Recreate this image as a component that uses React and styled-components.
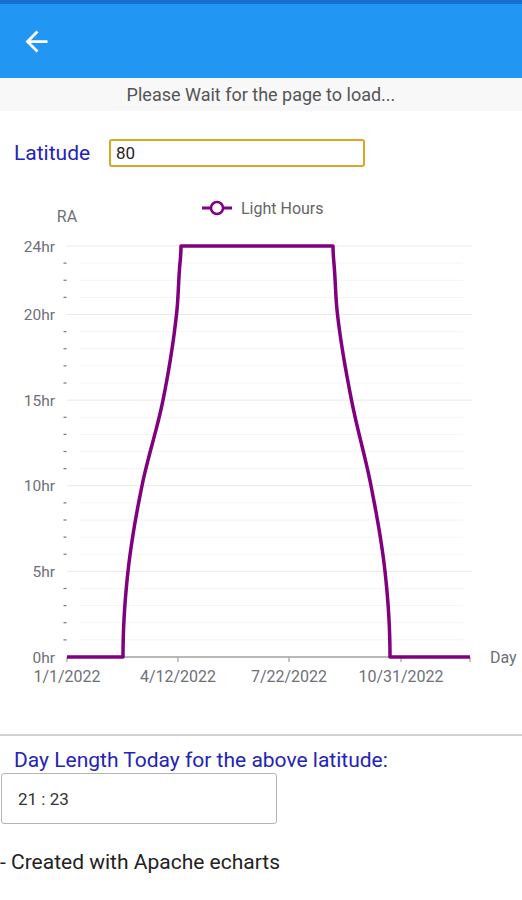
import React from "react";
import styled, { createGlobalStyle } from "styled-components";

const GlobalStyle = createGlobalStyle`
	body {
		margin: 0;
		background: #fff;
		font-family: Roboto, "Liberation Sans", sans-serif;
	}
`;

const PURPLE = "#800080";
const AXIS_TEXT = "#6e7079";

const hrToY = hr => 656 - hr * 17.125;

// x position of the curve at a few hour marks, read off the reference
const riseX = [[0, 123], [5, 128], [10, 142], [15, 163], [20, 176.5], [22.5, 179.3], [24, 181]];
const fallX = [[0, 390], [5, 385], [10, 371], [15, 351.5], [20, 337.5], [22.5, 334.6], [24, 333]];

// monotone cubic (hermite) so the curve stays smooth, vertical at 0 and 24
const sampleCurve = knots => {
	const n = knots.length;
	const sec = [];
	for (let i = 0; i < n - 1; i++) {
		sec.push((knots[i + 1][1] - knots[i][1]) / (knots[i + 1][0] - knots[i][0]));
	}
	const tan = knots.map((_, i) => (i === 0 || i === n - 1 ? 0 : (sec[i - 1] + sec[i]) / 2));
	const out = [];
	for (let i = 0; i < n - 1; i++) {
		const [h0, x0] = knots[i];
		const [h1, x1] = knots[i + 1];
		const dh = h1 - h0;
		for (let s = 0; s < 1; s += 0.05) {
			const s2 = s * s;
			const s3 = s2 * s;
			const x =
				(2 * s3 - 3 * s2 + 1) * x0 +
				(s3 - 2 * s2 + s) * dh * tan[i] +
				(-2 * s3 + 3 * s2) * x1 +
				(s3 - s2) * dh * tan[i + 1];
			out.push([x, h0 + s * dh]);
		}
	}
	out.push([knots[n - 1][1], knots[n - 1][0]]);
	return out;
};

const toPath = pts => pts.map(([x, h]) => `L${x.toFixed(2)},${hrToY(h).toFixed(2)}`).join(" ");

const linePath =
	`M67,${hrToY(0)} ` +
	toPath(sampleCurve(riseX)) +
	" " +
	toPath(sampleCurve(fallX).reverse()) +
	` L470,${hrToY(0)}`;

const majorHours = [0, 5, 10, 15, 20, 24];
const minorHours = Array.from({ length: 24 }, (_, i) => i + 1).filter(h => !majorHours.includes(h));
const xTicks = [
	{ x: 67, label: "1/1/2022" },
	{ x: 178, label: "4/12/2022" },
	{ x: 289, label: "7/22/2022" },
	{ x: 401, label: "10/31/2022" },
	{ x: 470 },
];

const Page = styled.div`
	width: 522px;
	min-height: 900px;
	background: #fff;
`;

const AppBar = styled.header`
	height: 74px;
	border-top: 4px solid #1b6ed0;
	background: #2196f3;
	display: flex;
	align-items: center;
	padding-left: 20px;
`;

const BackButton = styled.button`
	border: none;
	background: none;
	padding: 0;
	display: flex;
	color: #fff;
`;

const LoadingBar = styled.div`
	height: 32px;
	line-height: 32px;
	margin-top: 1px;
	background: #f8f8f8;
	text-align: center;
	font-size: 18px;
	color: #555;
`;

const FieldRow = styled.div`
	display: flex;
	align-items: center;
	margin-top: 28px;
	padding-left: 14px;
`;

const FieldLabel = styled.label`
	width: 95px;
	font-size: 21px;
	color: #2323b8;
`;

const LatInput = styled.div`
	box-sizing: border-box;
	width: 256px;
	height: 28px;
	border: 2px solid #dba526;
	border-radius: 3px;
	padding-left: 5px;
	display: flex;
	align-items: center;
	font-size: 17px;
	color: #222;
`;

const Chart = styled.svg`
	display: block;
	margin-top: 19px;
	font-family: Roboto, "Liberation Sans", sans-serif;
`;

const Divider = styled.hr`
	margin: 28px 0 0;
	border: none;
	border-top: 2px solid #d2d2d2;
`;

const ResultLabel = styled.div`
	margin: 12px 0 0 14px;
	font-size: 21px;
	line-height: 24px;
	color: #2323b8;
`;

const ResultBox = styled.div`
	box-sizing: border-box;
	margin: 1px 0 0 1px;
	width: 276px;
	height: 51px;
	border: 1px solid #b5b5b5;
	border-radius: 3px;
	padding-left: 16px;
	display: flex;
	align-items: center;
	font-size: 17px;
	color: #333;
`;

const Credit = styled.p`
	margin: 26px 0 0;
	font-size: 21px;
	line-height: 24px;
	color: #222;
`;

const LightHoursChart = () => (
	<Chart width="522" height="520" viewBox="0 185 522 520">
		{/* legend */}
		<line x1="202" y1="207" x2="232" y2="207" stroke={PURPLE} strokeWidth="3" />
		<circle cx="217" cy="207" r="6" fill="#fff" stroke={PURPLE} strokeWidth="2.5" />
		<text x="241" y="212.5" fontSize="16" fill="#666">Light Hours</text>

		<text x="67" y="221" fontSize="16" fill={AXIS_TEXT} textAnchor="middle">RA</text>

		{minorHours.map(h => (
			<g key={h}>
				<line x1="80" y1={hrToY(h)} x2="463" y2={hrToY(h)} stroke="#f4f4f4" strokeWidth="1" />
				<line x1="63.5" y1={hrToY(h)} x2="66.5" y2={hrToY(h)} stroke="#777" strokeWidth="1.2" />
			</g>
		))}
		{majorHours.filter(h => h > 0).map(h => (
			<line key={h} x1="67" y1={hrToY(h)} x2="472" y2={hrToY(h)} stroke="#e9e9e9" strokeWidth="1" />
		))}
		{majorHours.map(h => (
			<text key={h} x="55" y={hrToY(h) + 5.5} fontSize="15.5" fill={AXIS_TEXT} textAnchor="end">
				{h}hr
			</text>
		))}

		{/* x axis */}
		<line x1="67" y1="656" x2="470" y2="656" stroke="#a0a0a0" strokeWidth="1.5" />
		{xTicks.map(t => (
			<g key={t.x}>
				<line x1={t.x} y1="656" x2={t.x} y2="661" stroke="#a0a0a0" strokeWidth="1.2" />
				{t.label && (
					<text x={t.x} y="681" fontSize="16" fill={AXIS_TEXT} textAnchor="middle">
						{t.label}
					</text>
				)}
			</g>
		))}
		<text x="490" y="662" fontSize="16" fill={AXIS_TEXT}>Day</text>

		<path d={linePath} fill="none" stroke={PURPLE} strokeWidth="3.5" strokeLinejoin="round" />
	</Chart>
);

export default function App() {
	return (
		<Page>
			<GlobalStyle />
			<AppBar>
				<BackButton aria-label="Back">
					<svg width="33" height="33" viewBox="0 0 24 24" fill="currentColor">
						<path d="M20 11H7.83l5.59-5.59L12 4l-8 8 8 8 1.41-1.41L7.83 13H20v-2z" />
					</svg>
				</BackButton>
			</AppBar>
			<LoadingBar>Please Wait for the page to load...</LoadingBar>
			<FieldRow>
				<FieldLabel>Latitude</FieldLabel>
				<LatInput>80</LatInput>
			</FieldRow>
			<LightHoursChart />
			<Divider />
			<ResultLabel>Day Length Today for the above latitude:</ResultLabel>
			<ResultBox>21 : 23</ResultBox>
			<Credit>- Created with Apache echarts</Credit>
		</Page>
	);
}
